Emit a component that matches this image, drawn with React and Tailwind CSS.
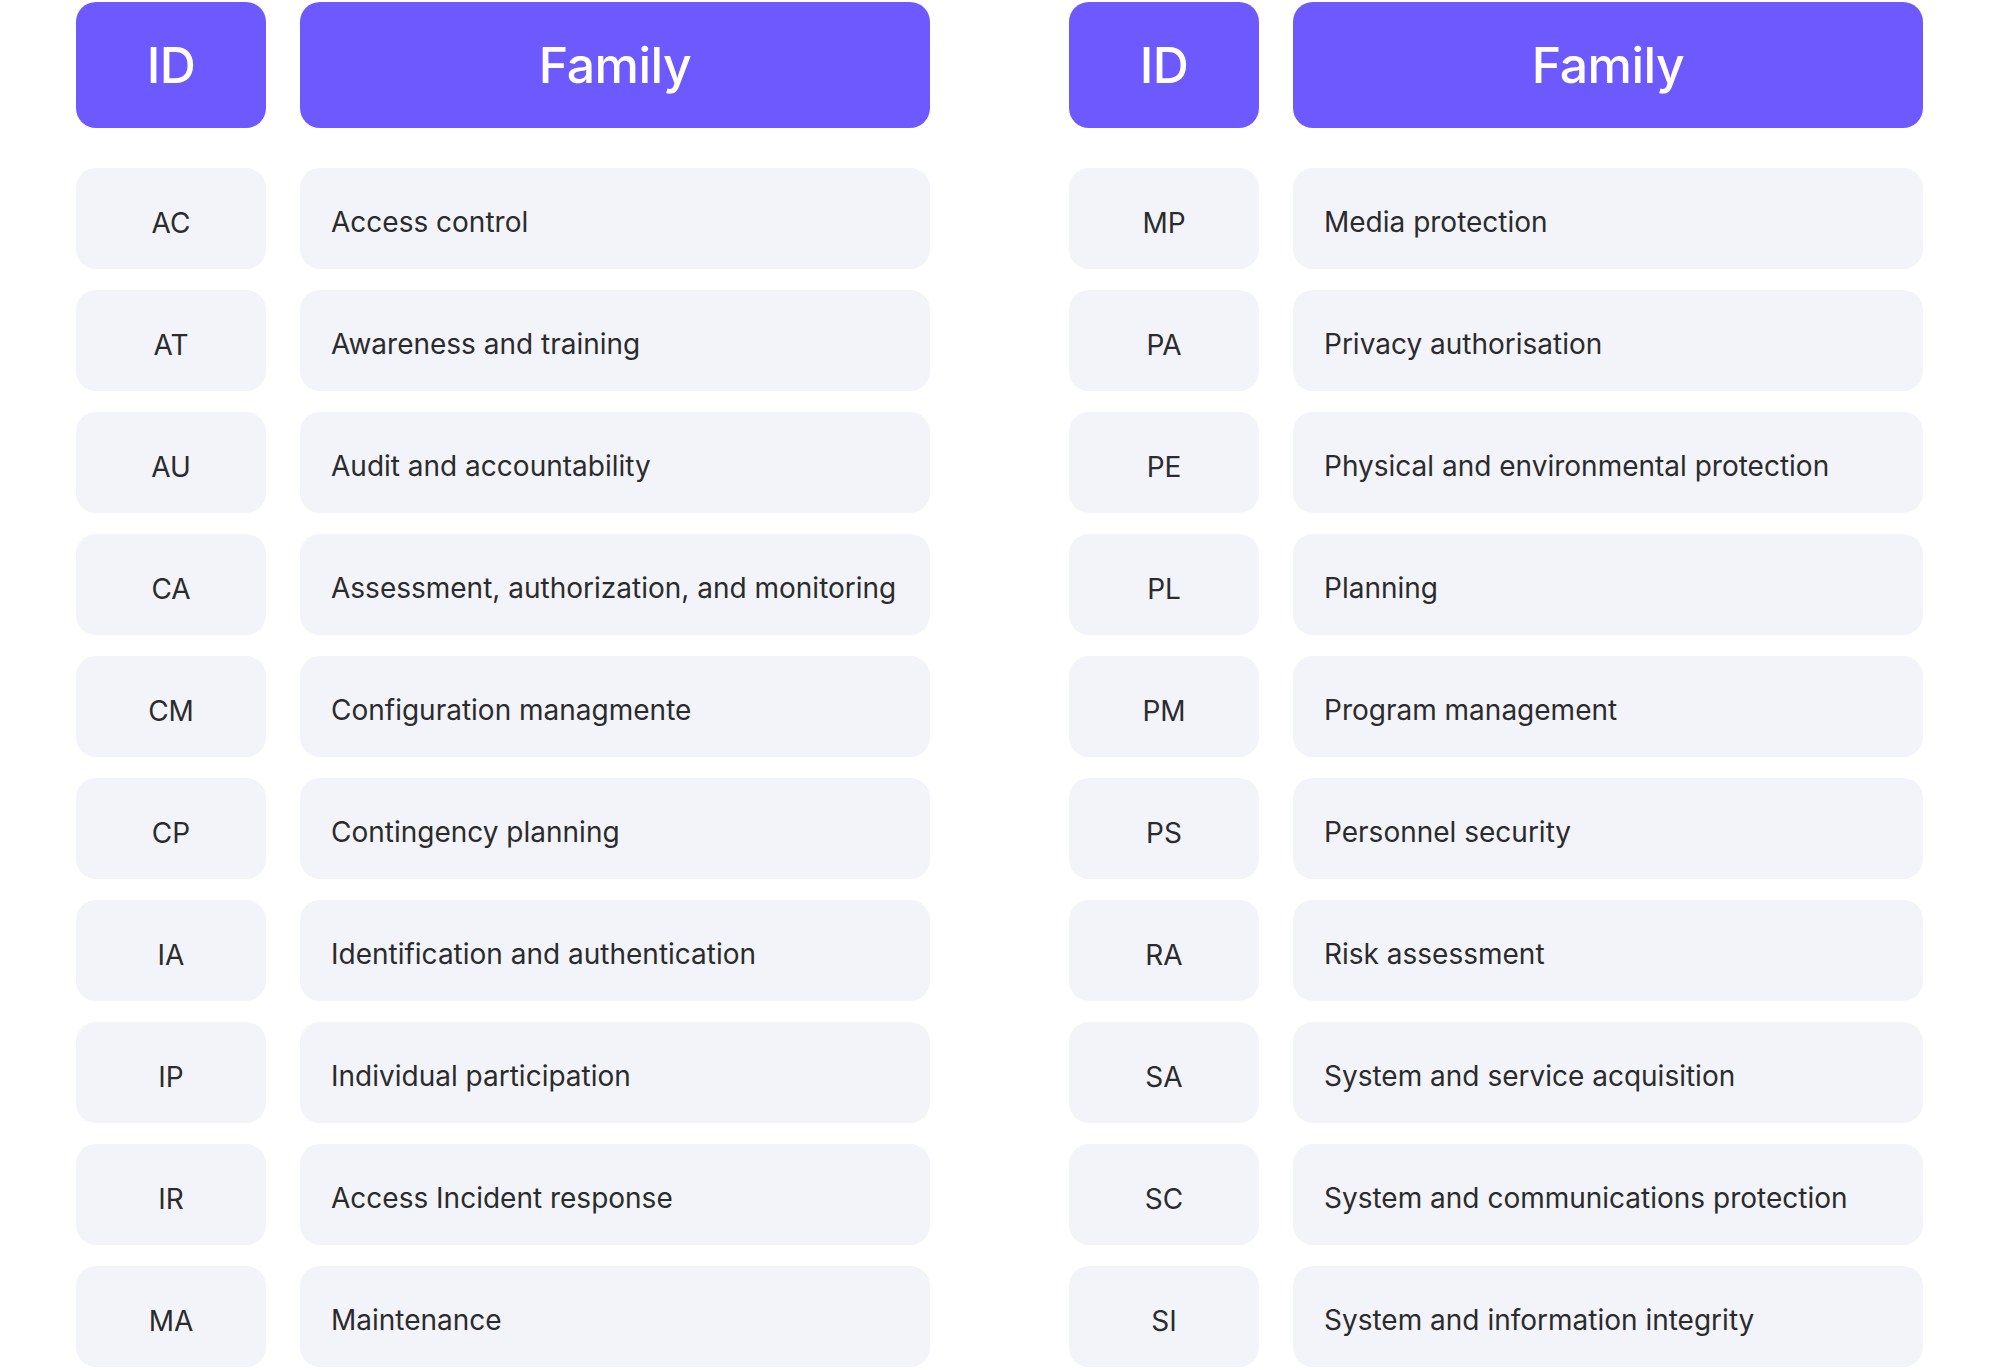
const LEFT = [
    ['AC', 'Access control'],
    ['AT', 'Awareness and training'],
    ['AU', 'Audit and accountability'],
    ['CA', 'Assessment, authorization, and monitoring'],
    ['CM', 'Configuration managmente'],
    ['CP', 'Contingency planning'],
    ['IA', 'Identification and authentication'],
    ['IP', 'Individual participation'],
    ['IR', 'Access Incident response'],
    ['MA', 'Maintenance'],
];

const RIGHT = [
    ['MP', 'Media protection'],
    ['PA', 'Privacy authorisation'],
    ['PE', 'Physical and environmental protection'],
    ['PL', 'Planning'],
    ['PM', 'Program management'],
    ['PS', 'Personnel security'],
    ['RA', 'Risk assessment'],
    ['SA', 'System and service acquisition'],
    ['SC', 'System and communications protection'],
    ['SI', 'System and information integrity'],
];

function FamilyTable({ rows }) {
    return (
        <div className="w-[854px]">
            {/* Header */}
            <div className="grid grid-cols-[190px_630px] gap-x-[34px]">
                <div className="h-[126px] rounded-[20px] bg-[#6e58ff] flex items-center justify-center text-white text-[50px] font-medium tracking-[-0.5px]">
                    ID
                </div>
                <div className="h-[126px] rounded-[20px] bg-[#6e58ff] flex items-center justify-center text-white text-[50px] font-medium tracking-[-0.5px]">
                    Family
                </div>
            </div>

            {/* Rows */}
            <div className="mt-[40px] flex flex-col gap-[21px]">
                {rows.map(([id, family]) => (
                    <div key={id} className="grid grid-cols-[190px_630px] gap-x-[34px]">
                        <div className="h-[101px] rounded-[20px] bg-[#f3f4f9] flex items-center justify-center pt-[8px] text-[28px] text-[#2b2b2d]">
                            {id}
                        </div>
                        <div className="h-[101px] rounded-[20px] bg-[#f3f4f9] flex items-center pl-[31px] pt-[6px] text-[28px] text-[#2b2b2d]">
                            {family}
                        </div>
                    </div>
                ))}
            </div>
        </div>
    );
}

export default function App() {
    return (
        <div
            className="w-[2000px] h-[1370px] bg-white pt-[2px] pl-[76px] flex gap-[139px] overflow-hidden"
            style={{ fontFamily: 'Inter, "Noto Sans", sans-serif' }}
        >
            <FamilyTable rows={LEFT} />
            <FamilyTable rows={RIGHT} />
        </div>
    );
}
